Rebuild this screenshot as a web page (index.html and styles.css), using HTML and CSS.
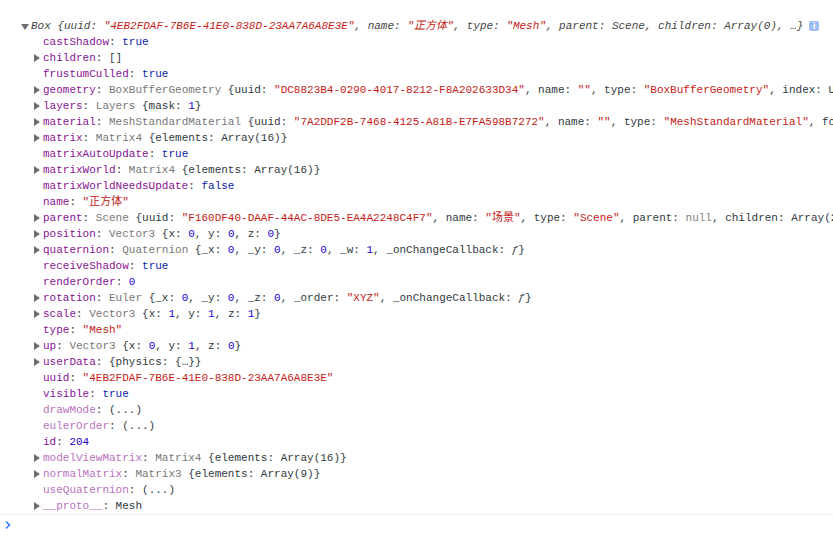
FILE: index.html
```html
<!DOCTYPE html>
<html>
<head>
<meta charset="utf-8">
<link rel="stylesheet" href="styles.css">
</head>
<body>
<div class="console">
  <div class="tree">
    <div class="row head"><span class="tw down"></span><span class="hd">Box {uuid: <span class="s">"4EB2FDAF-7B6E-41E0-838D-23AA7A6A8E3E"</span>, name: <span class="s">"正方体"</span>, type: <span class="s">"Mesh"</span>, parent: Scene, children: Array(0), …}</span><span class="info">i</span></div>
    <div class="row"><span class="tw"></span><span class="n">castShadow</span>: <span class="b">true</span></div>
    <div class="row"><span class="tw right"></span><span class="n">children</span>: []</div>
    <div class="row"><span class="tw"></span><span class="n">frustumCulled</span>: <span class="b">true</span></div>
    <div class="row"><span class="tw right"></span><span class="n">geometry</span>: <span class="c">BoxBufferGeometry</span> {uuid: <span class="s">"DC8823B4-0290-4017-8212-F8A202633D34"</span>, name: <span class="s">""</span>, type: <span class="s">"BoxBufferGeometry"</span>, index: Uint16BufferAttribute, …}</div>
    <div class="row"><span class="tw right"></span><span class="n">layers</span>: <span class="c">Layers</span> {mask: <span class="num">1</span>}</div>
    <div class="row"><span class="tw right"></span><span class="n">material</span>: <span class="c">MeshStandardMaterial</span> {uuid: <span class="s">"7A2DDF2B-7468-4125-A81B-E7FA598B7272"</span>, name: <span class="s">""</span>, type: <span class="s">"MeshStandardMaterial"</span>, fog: <span class="b">true</span>, …}</div>
    <div class="row"><span class="tw right"></span><span class="n">matrix</span>: <span class="c">Matrix4</span> {elements: Array(16)}</div>
    <div class="row"><span class="tw"></span><span class="n">matrixAutoUpdate</span>: <span class="b">true</span></div>
    <div class="row"><span class="tw right"></span><span class="n">matrixWorld</span>: <span class="c">Matrix4</span> {elements: Array(16)}</div>
    <div class="row"><span class="tw"></span><span class="n">matrixWorldNeedsUpdate</span>: <span class="b">false</span></div>
    <div class="row"><span class="tw"></span><span class="n">name</span>: <span class="s">"正方体"</span></div>
    <div class="row"><span class="tw right"></span><span class="n">parent</span>: <span class="c">Scene</span> {uuid: <span class="s">"F160DF40-DAAF-44AC-8DE5-EA4A2248C4F7"</span>, name: <span class="s">"场景"</span>, type: <span class="s">"Scene"</span>, parent: <span class="nul">null</span>, children: Array(2), …}</div>
    <div class="row"><span class="tw right"></span><span class="n">position</span>: <span class="c">Vector3</span> {x: <span class="num">0</span>, y: <span class="num">0</span>, z: <span class="num">0</span>}</div>
    <div class="row"><span class="tw right"></span><span class="n">quaternion</span>: <span class="c">Quaternion</span> {_x: <span class="num">0</span>, _y: <span class="num">0</span>, _z: <span class="num">0</span>, _w: <span class="num">1</span>, _onChangeCallback: <i>ƒ</i>}</div>
    <div class="row"><span class="tw"></span><span class="n">receiveShadow</span>: <span class="b">true</span></div>
    <div class="row"><span class="tw"></span><span class="n">renderOrder</span>: <span class="num">0</span></div>
    <div class="row"><span class="tw right"></span><span class="n">rotation</span>: <span class="c">Euler</span> {_x: <span class="num">0</span>, _y: <span class="num">0</span>, _z: <span class="num">0</span>, _order: <span class="s">"XYZ"</span>, _onChangeCallback: <i>ƒ</i>}</div>
    <div class="row"><span class="tw right"></span><span class="n">scale</span>: <span class="c">Vector3</span> {x: <span class="num">1</span>, y: <span class="num">1</span>, z: <span class="num">1</span>}</div>
    <div class="row"><span class="tw"></span><span class="n">type</span>: <span class="s">"Mesh"</span></div>
    <div class="row"><span class="tw right"></span><span class="n">up</span>: <span class="c">Vector3</span> {x: <span class="num">0</span>, y: <span class="num">1</span>, z: <span class="num">0</span>}</div>
    <div class="row"><span class="tw right"></span><span class="n">userData</span>: {physics: {…}}</div>
    <div class="row"><span class="tw"></span><span class="n">uuid</span>: <span class="s">"4EB2FDAF-7B6E-41E0-838D-23AA7A6A8E3E"</span></div>
    <div class="row"><span class="tw"></span><span class="n">visible</span>: <span class="b">true</span></div>
    <div class="row"><span class="tw"></span><span class="nd">drawMode</span>: (...)</div>
    <div class="row"><span class="tw"></span><span class="nd">eulerOrder</span>: (...)</div>
    <div class="row"><span class="tw"></span><span class="n">id</span>: <span class="num">204</span></div>
    <div class="row"><span class="tw right"></span><span class="nd">modelViewMatrix</span>: <span class="c">Matrix4</span> {elements: Array(16)}</div>
    <div class="row"><span class="tw right"></span><span class="nd">normalMatrix</span>: <span class="c">Matrix3</span> {elements: Array(9)}</div>
    <div class="row"><span class="tw"></span><span class="nd">useQuaternion</span>: (...)</div>
    <div class="row"><span class="tw right"></span><span class="nd">__proto__</span>: Mesh</div>
  </div>
  <div class="prompt">
    <svg width="8" height="10" viewBox="0 0 8 10"><path d="M2 1.5 L5.5 5 L2 8.5" fill="none" stroke="#367cf1" stroke-width="1.6"/></svg>
  </div>
</div>
</body>
</html>
```

FILE: styles.css
```css
html, body {
  margin: 0;
  padding: 0;
  background: #ffffff;
}
.console {
  width: 833px;
  height: 540px;
  overflow: hidden;
  font-family: "Liberation Mono", "Noto Sans CJK SC", monospace;
  font-size: 11px;
  color: #303942;
}
.tree {
  padding-top: 18px;
}
.row {
  display: block;
  height: 16px;
  line-height: 16px;
  white-space: nowrap;
  overflow: hidden;
  padding-left: 34px;
}
.row.head {
  padding-left: 21px;
}
.tw {
  display: inline-block;
  vertical-align: top;
  width: 9px;
  height: 16px;
  position: relative;
}
.head .tw {
  width: 10px;
}
.tw.right::before {
  content: "";
  position: absolute;
  left: 0;
  top: 4px;
  border-left: 6px solid #6e6e6e;
  border-top: 4px solid transparent;
  border-bottom: 4px solid transparent;
}
.tw.down::before {
  content: "";
  position: absolute;
  left: 0;
  top: 6px;
  border-top: 6px solid #6e6e6e;
  border-left: 4px solid transparent;
  border-right: 4px solid transparent;
}
.hd {
  font-style: italic;
  color: #444;
}
.n { color: #881391; }
.nd { color: #b871bd; }
.s { color: #c41a16; }
.num { color: #1c00cf; }
.b { color: #0d22aa; }
.c { color: #777777; }
.nul { color: #808080; }
.info {
  display: inline-block;
  vertical-align: top;
  margin-top: 3px;
  margin-left: 6px;
  width: 10px;
  height: 10px;
  border-radius: 2px;
  background: #9ebcf5;
  color: #ffffff;
  font-family: "Liberation Sans", sans-serif;
  font-weight: bold;
  font-size: 9px;
  line-height: 10px;
  text-align: center;
  font-style: normal;
}
.prompt {
  border-top: 1px solid #efefef;
  height: 24px;
  padding-left: 4px;
  padding-top: 5px;
  box-sizing: border-box;
}
.prompt svg {
  display: block;
}
```
